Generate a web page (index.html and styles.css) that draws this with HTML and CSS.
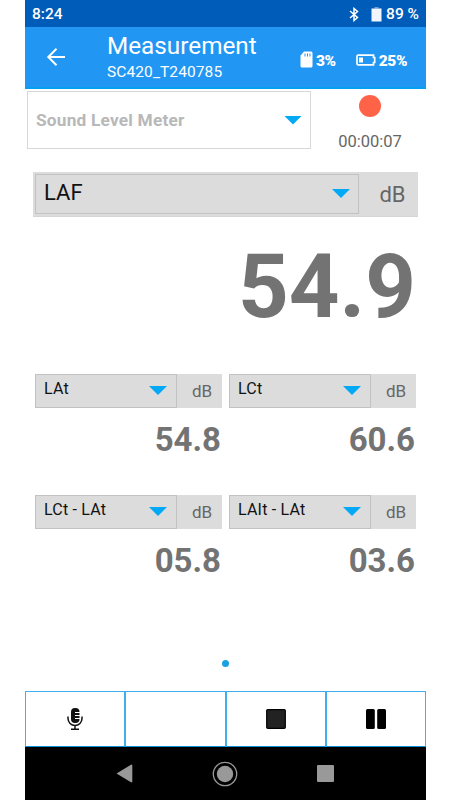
FILE: index.html
```html
<!DOCTYPE html>
<html lang="en">
<head>
    <meta charset="UTF-8">
    <meta name="viewport" content="width=device-width, initial-scale=1.0">
    <title>Measurement</title>
    <link rel="stylesheet" href="styles.css">
</head>
<body>
    <div class="phone">
        <div class="status-bar">
            <span class="clock">8:24</span>
            <svg class="bluetooth" width="10" height="15" viewBox="0 0 10 15" fill="none" stroke="#fff" stroke-width="1.5"><path d="M1 4l7.500 6.500L5 13.500V1.500l3.500 3L1 11"/></svg>
            <svg class="phone-battery" width="11" height="15" viewBox="0 0 11 15" fill="#f2f5fc"><path fill="#6f9fd6" d="M3.500 0h4v1.500h-4z"/><path d="M.5 1.500h10v13H.5z"/></svg>
            <span class="phone-level">89 %</span>
        </div>

        <header class="app-bar">
            <svg class="back" width="20" height="20" viewBox="0 0 20 20" fill="none" stroke="#fff" stroke-width="2"><path d="M19 10H2.500M10.500 1.800L2.300 10l8.200 8.200"/></svg>
            <div class="titles">
                <h1>Measurement</h1>
                <p>SC420_T240785</p>
            </div>
            <svg class="sd-card" width="13" height="17" viewBox="0 0 13 17"><path fill="#fff" d="M4 .5h7a1.500 1.500 0 0 1 1.500 1.500v13a1.500 1.500 0 0 1-1.500 1.500H2A1.500 1.500 0 0 1 .5 15V4.500z"/><path stroke="#2196f3" stroke-width="1" d="M5 2.500v3M7.500 2.500v3M10 2.500v3"/></svg>
            <span class="sd-level">3%</span>
            <svg class="meter-battery" width="20" height="12" viewBox="0 0 20 12"><path fill="none" stroke="#fff" stroke-width="1.700" d="M2 1.200h15.500v2.300h1.200v5h-1.200v2.300H2a1 1 0 0 1-1-1V2.200a1 1 0 0 1 1-1z"/><path fill="#fff" d="M3 3.500h4v5H3z"/></svg>
            <span class="meter-level">25%</span>
        </header>

        <main>
            <div class="mode-row">
                <div class="mode-select">Sound Level Meter<i class="arrow"></i></div>
                <div class="record">
                    <span class="record-dot"></span>
                    <span class="elapsed">00:00:07</span>
                </div>
            </div>

            <section class="main-reading">
                <div class="reading-bar">
                    <div class="select"><span>LAF</span><i class="arrow"></i></div>
                    <span class="unit">dB</span>
                </div>
                <div class="value">54.9</div>
            </section>

            <section class="readings">
                <div class="reading">
                    <div class="reading-bar">
                        <div class="select"><span>LAt</span><i class="arrow"></i></div>
                        <span class="unit">dB</span>
                    </div>
                    <div class="value">54.8</div>
                </div>
                <div class="reading">
                    <div class="reading-bar">
                        <div class="select"><span>LCt</span><i class="arrow"></i></div>
                        <span class="unit">dB</span>
                    </div>
                    <div class="value">60.6</div>
                </div>
                <div class="reading">
                    <div class="reading-bar">
                        <div class="select"><span>LCt - LAt</span><i class="arrow"></i></div>
                        <span class="unit">dB</span>
                    </div>
                    <div class="value">05.8</div>
                </div>
                <div class="reading">
                    <div class="reading-bar">
                        <div class="select"><span>LAIt - LAt</span><i class="arrow"></i></div>
                        <span class="unit">dB</span>
                    </div>
                    <div class="value">03.6</div>
                </div>
            </section>

            <div class="pager"><span></span></div>
        </main>

        <div class="controls">
            <button aria-label="Voice note">
                <svg width="16" height="24" viewBox="0 0 16 24"><rect x="4" y="1" width="8.500" height="15" rx="4" fill="#111"/><path stroke="#fff" stroke-width="1" d="M8 5.500h5M8 8.500h5M8 11.500h5"/><path fill="none" stroke="#111" stroke-width="1.500" d="M1 9.500v2a7 7 0 0 0 14 0v-2M8 18.500V22M4 22.200h8"/></svg>
            </button>
            <button aria-label="Empty"></button>
            <button aria-label="Stop">
                <svg width="20" height="20" viewBox="0 0 20 20"><rect x=".7" y=".7" width="18.600" height="18.600" rx="1" fill="#222" stroke="#000" stroke-width="1.200"/></svg>
            </button>
            <button aria-label="Pause">
                <svg width="20" height="20" viewBox="0 0 20 20"><rect width="8.800" height="20" rx="1.500"/><rect x="11.200" width="8.800" height="20" rx="1.500"/></svg>
            </button>
        </div>

        <nav class="nav-bar">
            <svg width="17" height="19" viewBox="0 0 17 19" fill="#999"><path d="M.5 9.500L15 .7q1.300-.4 1.300 1v15.600q0 1.400-1.300 1z"/></svg>
            <svg width="26" height="26" viewBox="0 0 26 26"><circle cx="13" cy="13" r="11.700" fill="none" stroke="#999" stroke-width="1.300"/><circle cx="13" cy="13" r="8.200" fill="#999"/></svg>
            <svg width="17" height="17" viewBox="0 0 17 17" fill="#999"><rect width="17" height="17" rx="1"/></svg>
        </nav>
    </div>
</body>
</html>
```
FILE: styles.css
```css
* {
    box-sizing: border-box;
}
body {
    margin: 0;
    background: #fff;
    font-family: Roboto, sans-serif;
}
.phone {
    display: flex;
    flex-direction: column;
    width: 401px;
    height: 800px;
    margin-left: 25px;
}
.status-bar {
    display: flex;
    align-items: center;
    height: 27px;
    padding: 1px 7px 0;
    background: #005cb9;
    color: #fff;
    font-size: 15.5px;
    font-weight: 500;
}
.clock {
    flex: 1;
}
.bluetooth {
    margin-right: 12px;
}
.phone-battery {
    margin-right: 4px;
}
.app-bar {
    display: flex;
    align-items: center;
    height: 62px;
    padding: 0 19px 0 21px;
    background: #2196f3;
    border-bottom: 2px solid #03a0f0;
    color: #fff;
    font-size: 15.5px;
    font-weight: 900;
}
.titles {
    flex: 1;
    margin-left: 41px;
}
.titles h1 {
    margin: 0;
    font-size: 24.3px;
    font-weight: 400;
    line-height: 30px;
}
.titles p {
    margin: 0;
    font-size: 15.5px;
    font-weight: 400;
    letter-spacing: 0.1px;
    line-height: 23px;
}
.sd-card {
    margin-right: 3px;
}
.sd-level,
.meter-level {
    margin-top: 7px;
    letter-spacing: -0.4px;
}
.sd-card,
.meter-battery {
    margin-top: 5px;
}
.meter-battery {
    margin-right: 3px;
    margin-left: 20px;
}
main {
    flex: 1;
    display: flex;
    flex-direction: column;
}
.mode-row {
    display: flex;
    padding: 2px 0 0 2px;
}
.mode-select {
    display: flex;
    align-items: center;
    justify-content: space-between;
    width: 284px;
    height: 58px;
    padding: 0 8px;
    border: 1px solid #d8d8d8;
    color: #b8b8b8;
    font-size: 17.3px;
    font-weight: 700;
    letter-spacing: 0.2px;
}
.arrow {
    width: 18px;
    height: 9px;
    background: #03a9f4;
    clip-path: polygon(0 0, 100% 0, 50% 100%);
}
.record {
    flex: 1;
    display: flex;
    flex-direction: column;
    align-items: center;
    padding: 4px 0 0 3px;
}
.record-dot {
    width: 22px;
    height: 22px;
    border-radius: 50%;
    background: #ff6347;
}
.elapsed {
    margin-top: 14px;
    color: #666;
    font-size: 16.5px;
    line-height: 21px;
}
.reading-bar {
    display: flex;
    background: #dcdcdc;
}
.select {
    display: flex;
    justify-content: space-between;
    border: 1px solid #c2c2c2;
    color: #111;
}
.unit {
    flex: 1;
    text-align: center;
    color: #666;
}
.value {
    text-align: right;
    color: #737373;
    font-weight: 700;
}
.main-reading {
    width: 385px;
    margin: 20px 0 0 8px;
}
.main-reading .reading-bar {
    height: 45px;
    padding: 2px 0 2px 2px;
    border-bottom: 1px solid #d5d5d5;
}
.main-reading .select {
    width: 324px;
    padding: 0 8px 0 8px;
    font-size: 22px;
    line-height: 35px;
}
.main-reading .arrow {
    margin-top: 14px;
}
.main-reading .unit {
    padding-left: 8px;
    font-size: 22px;
    line-height: 42px;
}
.main-reading .value {
    padding-right: 2px;
    font-size: 88.5px;
    line-height: 104px;
    margin-top: 18px;
}
.readings {
    display: grid;
    grid-template-columns: 187px 187px;
    column-gap: 7px;
    row-gap: 37px;
    margin: 35px 0 0 10px;
}
.reading .reading-bar {
    height: 34px;
}
.reading .select {
    width: 142px;
    padding: 0 9px 0 8px;
    font-size: 16px;
    letter-spacing: 0.2px;
    line-height: 27px;
}
.reading .arrow {
    margin-top: 11px;
}
.reading .unit {
    padding-left: 5px;
    font-size: 17px;
    line-height: 34px;
}
.reading .value {
    height: 50px;
    padding-right: 1px;
    font-size: 33px;
    line-height: 63px;
}
.pager {
    display: flex;
    justify-content: center;
    margin-top: 81px;
}
.pager span {
    width: 7px;
    height: 7px;
    border-radius: 50%;
    background: #1ba1e2;
}
.controls {
    display: flex;
    height: 56px;
}
.controls button {
    flex: 1;
    display: flex;
    align-items: center;
    justify-content: center;
    padding: 0;
    background: #fff;
    border: 1px solid #42aeea;
    border-bottom-color: #0a8fd8;
}
.nav-bar {
    display: flex;
    align-items: center;
    justify-content: space-between;
    height: 53px;
    padding: 0 92px 0 91px;
    background: #000;
}
```
